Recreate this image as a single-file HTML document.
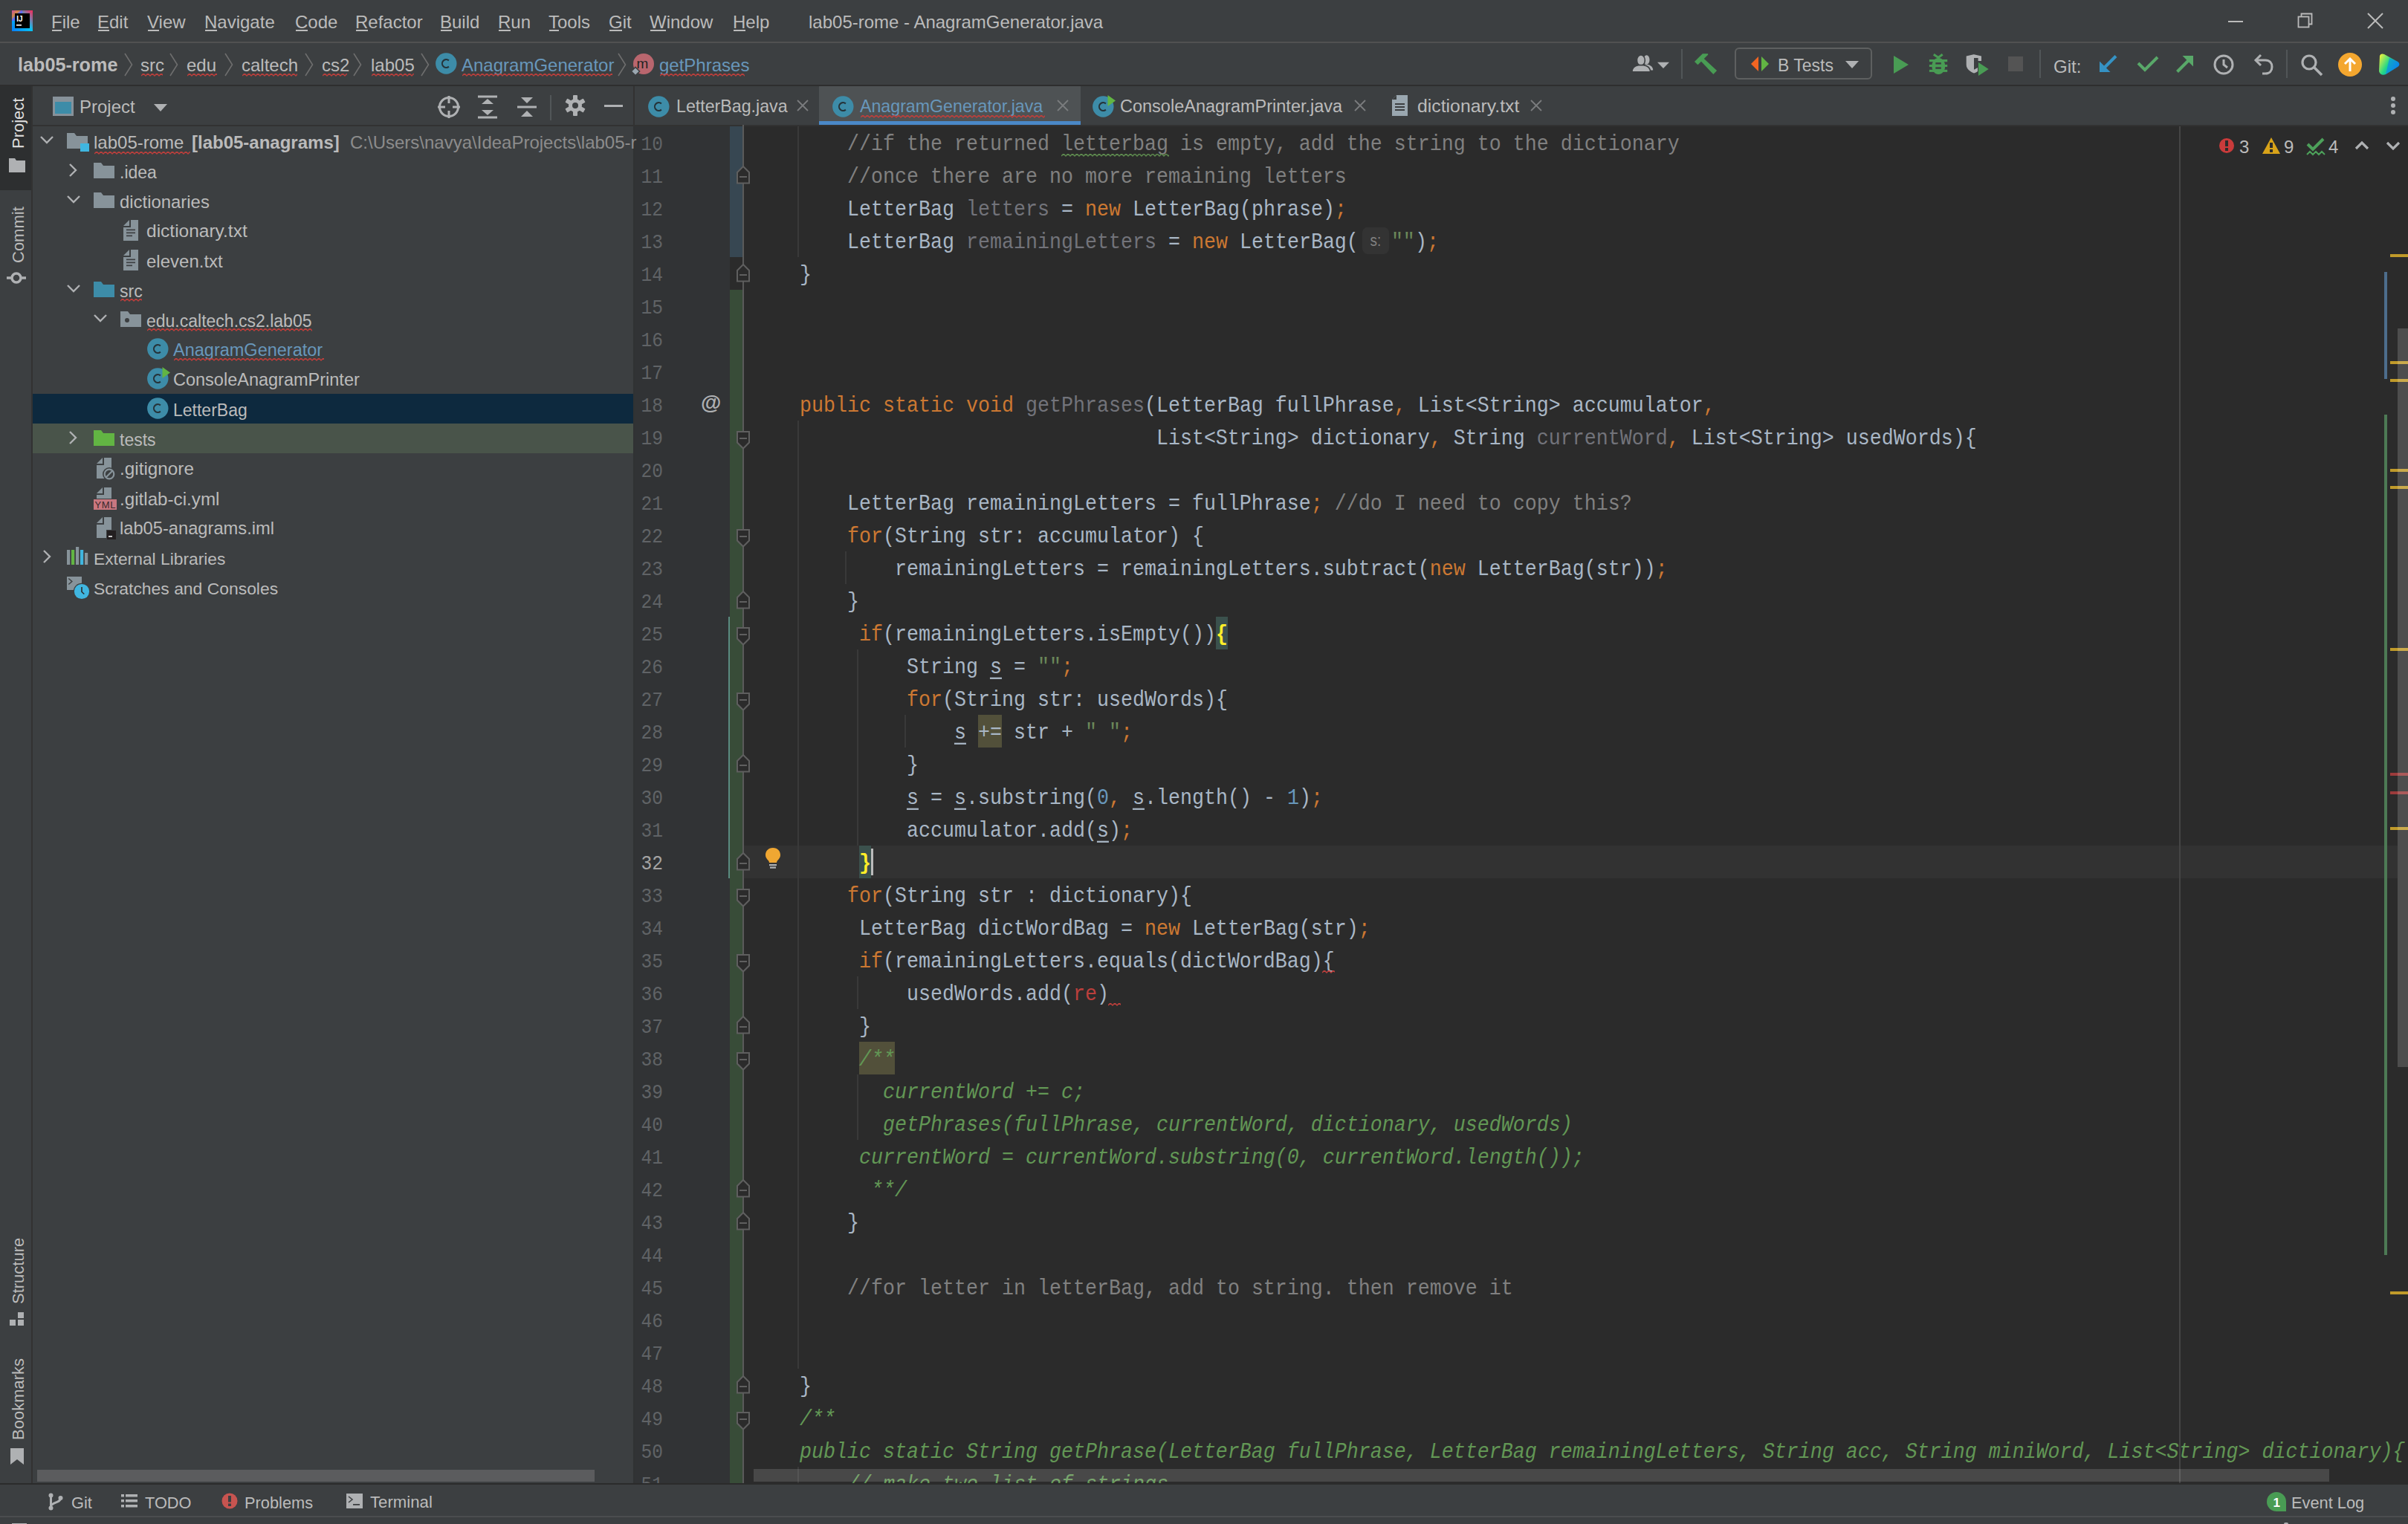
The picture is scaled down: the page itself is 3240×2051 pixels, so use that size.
<!DOCTYPE html>
<html><head><meta charset="utf-8">
<style>
*{margin:0;padding:0;box-sizing:border-box}
html,body{width:3240px;height:2051px;overflow:hidden;background:#3C3F41;font-family:"Liberation Sans",sans-serif;color:#BBBBBB;font-size:24px}
.a{position:absolute}
.t{position:absolute;white-space:pre;line-height:1}
.code{position:absolute;left:1076px;font-family:"Liberation Mono",monospace;font-size:26.67px;line-height:44px;white-space:pre;color:#A9B7C6;height:44px;transform:scaleY(1.13);transform-origin:0 29px}
.k{color:#CC7832}
.c{color:#808080}
.g{color:#72737A}
.s{color:#6A8759}
.n{color:#6897BB}
.d{color:#629755;font-style:italic}
.r{color:#BC3F3C}
.u{text-decoration:underline;text-underline-offset:5px;text-decoration-thickness:2px}
</style></head><body>
<div class="a" style="left:0px;top:0px;width:3240px;height:56px;background:#3C3F41;"></div>
<div class="a" style="left:0px;top:56px;width:3240px;height:2px;background:#515151;"></div>
<div class="a" style="left:0px;top:58px;width:3240px;height:56px;background:#3C3F41;"></div>
<div class="a" style="left:0px;top:114px;width:3240px;height:2px;background:#2E2E2E;"></div>
<div class="a" style="left:0px;top:116px;width:42px;height:1880px;background:#3C3F41;"></div>
<div class="a" style="left:0px;top:116px;width:42px;height:140px;background:#2D2F30;"></div>
<div class="a" style="left:42px;top:116px;width:2px;height:1880px;background:#323232;"></div>
<div class="a" style="left:44px;top:116px;width:808px;height:52px;background:#3C3F41;"></div>
<div class="a" style="left:44px;top:168px;width:808px;height:2px;background:#323232;"></div>
<div class="a" style="left:852px;top:116px;width:2388px;height:52px;background:#3C3F41;"></div>
<div class="a" style="left:852px;top:168px;width:2388px;height:1828px;background:#2B2B2B;"></div>
<div class="a" style="left:852px;top:168px;width:130px;height:1828px;background:#313335;"></div>
<div class="a" style="left:852px;top:116px;width:2px;height:52px;background:#323232;"></div>
<div class="a" style="left:852px;top:170px;width:2px;height:1826px;background:#303233;"></div>
<div class="a" style="left:852px;top:168px;width:2388px;height:2px;background:#323232;"></div>
<div class="a" style="left:0px;top:1996px;width:3240px;height:2px;background:#2B2B2B;"></div>
<div class="a" style="left:0px;top:1998px;width:3240px;height:42px;background:#3C3F41;"></div>
<div class="a" style="left:0px;top:2040px;width:3240px;height:2px;background:#4B4D4F;"></div>
<div class="a" style="left:0px;top:2042px;width:3240px;height:9px;background:#3C3F41;"></div>
<div class="a" style="left:1001px;top:1138px;width:2225px;height:44px;background:#323232;"></div>
<div class="a" style="left:1636px;top:830px;width:16px;height:44px;background:#3B514D;"></div>
<div class="a" style="left:1156px;top:1138px;width:16px;height:44px;background:#3B514D;"></div>
<div class="a" style="left:1316px;top:962px;width:32px;height:44px;background:#52503A;"></div>
<div class="a" style="left:1156px;top:1402px;width:48px;height:44px;background:#52503A;"></div>
<div class="a" style="left:1172px;top:1142px;width:3px;height:36px;background:#BBBBBB;"></div>
<div class="a" style="left:0;top:0;width:3240px;height:1996px;overflow:hidden">
<div class="code" style="top:173px">    <span class="c">//if the returned letterbag is empty, add the string to the dictionary</span></div>
<div class="code" style="top:217px">    <span class="c">//once there are no more remaining letters</span></div>
<div class="code" style="top:261px">    LetterBag <span class="g">letters</span> = <span class="k">new</span> LetterBag(phrase)<span class="k">;</span></div>
<div class="code" style="top:305px">    LetterBag <span class="g">remainingLetters</span> = <span class="k">new</span> LetterBag(<span style="display:inline-block;width:44px;height:34px;vertical-align:-8px;position:relative"><span style="position:absolute;left:5px;top:1px;width:36px;height:31.6px;background:#333333;border-radius:7px;color:#808080;font-family:Liberation Sans;font-size:19px;line-height:31.6px;text-align:center">s:</span></span><span class="s">&quot;&quot;</span>)<span class="k">;</span></div>
<div class="code" style="top:349px">}</div>
<div class="code" style="top:525px"><span class="k">public static void </span><span class="g">getPhrases</span>(LetterBag fullPhrase<span class="k">,</span> List&lt;String&gt; accumulator<span class="k">,</span></div>
<div class="code" style="top:569px">                              List&lt;String&gt; dictionary<span class="k">,</span> String <span class="g">currentWord</span><span class="k">,</span> List&lt;String&gt; usedWords){</div>
<div class="code" style="top:657px">    LetterBag remainingLetters = fullPhrase<span class="k">;</span><span class="c"> //do I need to copy this?</span></div>
<div class="code" style="top:701px">    <span class="k">for</span>(String str: accumulator) {</div>
<div class="code" style="top:745px">        remainingLetters = remainingLetters.subtract(<span class="k">new</span> LetterBag(str))<span class="k">;</span></div>
<div class="code" style="top:789px">    }</div>
<div class="code" style="top:833px">     <span class="k">if</span>(remainingLetters.isEmpty())<span style="color:#FFEF28;font-weight:bold">{</span></div>
<div class="code" style="top:877px">         String <span class="u">s</span> = <span class="s">&quot;&quot;</span><span class="k">;</span></div>
<div class="code" style="top:921px">         <span class="k">for</span>(String str: usedWords){</div>
<div class="code" style="top:965px">             <span class="u">s</span> += str + <span class="s">&quot; &quot;</span><span class="k">;</span></div>
<div class="code" style="top:1009px">         }</div>
<div class="code" style="top:1053px">         <span class="u">s</span> = <span class="u">s</span>.substring(<span class="n">0</span><span class="k">,</span> <span class="u">s</span>.length() - <span class="n">1</span>)<span class="k">;</span></div>
<div class="code" style="top:1097px">         accumulator.add(<span class="u">s</span>)<span class="k">;</span></div>
<div class="code" style="top:1141px">     <span style="color:#FFEF28;font-weight:bold">}</span></div>
<div class="code" style="top:1185px">    <span class="k">for</span>(String str : dictionary){</div>
<div class="code" style="top:1229px">     LetterBag dictWordBag = <span class="k">new</span> LetterBag(str)<span class="k">;</span></div>
<div class="code" style="top:1273px">     <span class="k">if</span>(remainingLetters.equals(dictWordBag){</div>
<div class="code" style="top:1317px">         usedWords.add(<span class="r">re</span>)</div>
<div class="code" style="top:1361px">     }</div>
<div class="code" style="top:1405px">     <span class="d">/**</span></div>
<div class="code" style="top:1449px">       <span class="d">currentWord += c;</span></div>
<div class="code" style="top:1493px">       <span class="d">getPhrases(fullPhrase, currentWord, dictionary, usedWords)</span></div>
<div class="code" style="top:1537px">     <span class="d">currentWord = currentWord.substring(0, currentWord.length());</span></div>
<div class="code" style="top:1581px">      <span class="d">**/</span></div>
<div class="code" style="top:1625px">    }</div>
<div class="code" style="top:1713px">    <span class="c">//for letter in letterBag, add to string. then remove it</span></div>
<div class="code" style="top:1845px">}</div>
<div class="code" style="top:1889px"><span class="d">/**</span></div>
<div class="code" style="top:1933px"><span class="d">public static String getPhrase(LetterBag fullPhrase, LetterBag remainingLetters, String acc, String miniWord, List&lt;String&gt; dictionary){</span></div>
<div class="code" style="top:1977px">    <span class="d">// make two list of strings</span></div>
</div>
<div class="a" style="left:0;top:0;width:3240px;height:1996px;overflow:hidden">
<div class="a" style="left:982px;top:170px;width:17px;height:176px;background:#374752;"></div>
<div class="a" style="left:982px;top:390px;width:17px;height:1606px;background:#384C38;"></div>
<div class="a" style="left:980px;top:830px;width:2px;height:352px;background:#5A8A80;"></div>
<div class="a" style="left:999px;top:168px;width:2px;height:1828px;background:#5A5A5A;"></div>
<div class="t" style="left:862.5px;top:184.14px;font-family:'Liberation Mono',monospace;font-size:24.6px;color:#606366;transform:scaleY(1.12);transform-origin:0 18.9px">10</div>
<div class="t" style="left:862.5px;top:228.14px;font-family:'Liberation Mono',monospace;font-size:24.6px;color:#606366;transform:scaleY(1.12);transform-origin:0 18.9px">11</div>
<div class="t" style="left:862.5px;top:272.14px;font-family:'Liberation Mono',monospace;font-size:24.6px;color:#606366;transform:scaleY(1.12);transform-origin:0 18.9px">12</div>
<div class="t" style="left:862.5px;top:316.14px;font-family:'Liberation Mono',monospace;font-size:24.6px;color:#606366;transform:scaleY(1.12);transform-origin:0 18.9px">13</div>
<div class="t" style="left:862.5px;top:360.14px;font-family:'Liberation Mono',monospace;font-size:24.6px;color:#606366;transform:scaleY(1.12);transform-origin:0 18.9px">14</div>
<div class="t" style="left:862.5px;top:404.14px;font-family:'Liberation Mono',monospace;font-size:24.6px;color:#606366;transform:scaleY(1.12);transform-origin:0 18.9px">15</div>
<div class="t" style="left:862.5px;top:448.14px;font-family:'Liberation Mono',monospace;font-size:24.6px;color:#606366;transform:scaleY(1.12);transform-origin:0 18.9px">16</div>
<div class="t" style="left:862.5px;top:492.14px;font-family:'Liberation Mono',monospace;font-size:24.6px;color:#606366;transform:scaleY(1.12);transform-origin:0 18.9px">17</div>
<div class="t" style="left:862.5px;top:536.14px;font-family:'Liberation Mono',monospace;font-size:24.6px;color:#606366;transform:scaleY(1.12);transform-origin:0 18.9px">18</div>
<div class="t" style="left:862.5px;top:580.14px;font-family:'Liberation Mono',monospace;font-size:24.6px;color:#606366;transform:scaleY(1.12);transform-origin:0 18.9px">19</div>
<div class="t" style="left:862.5px;top:624.14px;font-family:'Liberation Mono',monospace;font-size:24.6px;color:#606366;transform:scaleY(1.12);transform-origin:0 18.9px">20</div>
<div class="t" style="left:862.5px;top:668.14px;font-family:'Liberation Mono',monospace;font-size:24.6px;color:#606366;transform:scaleY(1.12);transform-origin:0 18.9px">21</div>
<div class="t" style="left:862.5px;top:712.14px;font-family:'Liberation Mono',monospace;font-size:24.6px;color:#606366;transform:scaleY(1.12);transform-origin:0 18.9px">22</div>
<div class="t" style="left:862.5px;top:756.14px;font-family:'Liberation Mono',monospace;font-size:24.6px;color:#606366;transform:scaleY(1.12);transform-origin:0 18.9px">23</div>
<div class="t" style="left:862.5px;top:800.14px;font-family:'Liberation Mono',monospace;font-size:24.6px;color:#606366;transform:scaleY(1.12);transform-origin:0 18.9px">24</div>
<div class="t" style="left:862.5px;top:844.14px;font-family:'Liberation Mono',monospace;font-size:24.6px;color:#606366;transform:scaleY(1.12);transform-origin:0 18.9px">25</div>
<div class="t" style="left:862.5px;top:888.14px;font-family:'Liberation Mono',monospace;font-size:24.6px;color:#606366;transform:scaleY(1.12);transform-origin:0 18.9px">26</div>
<div class="t" style="left:862.5px;top:932.14px;font-family:'Liberation Mono',monospace;font-size:24.6px;color:#606366;transform:scaleY(1.12);transform-origin:0 18.9px">27</div>
<div class="t" style="left:862.5px;top:976.14px;font-family:'Liberation Mono',monospace;font-size:24.6px;color:#606366;transform:scaleY(1.12);transform-origin:0 18.9px">28</div>
<div class="t" style="left:862.5px;top:1020.14px;font-family:'Liberation Mono',monospace;font-size:24.6px;color:#606366;transform:scaleY(1.12);transform-origin:0 18.9px">29</div>
<div class="t" style="left:862.5px;top:1064.14px;font-family:'Liberation Mono',monospace;font-size:24.6px;color:#606366;transform:scaleY(1.12);transform-origin:0 18.9px">30</div>
<div class="t" style="left:862.5px;top:1108.14px;font-family:'Liberation Mono',monospace;font-size:24.6px;color:#606366;transform:scaleY(1.12);transform-origin:0 18.9px">31</div>
<div class="t" style="left:862.5px;top:1152.14px;font-family:'Liberation Mono',monospace;font-size:24.6px;color:#A4A3A3;transform:scaleY(1.12);transform-origin:0 18.9px">32</div>
<div class="t" style="left:862.5px;top:1196.14px;font-family:'Liberation Mono',monospace;font-size:24.6px;color:#606366;transform:scaleY(1.12);transform-origin:0 18.9px">33</div>
<div class="t" style="left:862.5px;top:1240.14px;font-family:'Liberation Mono',monospace;font-size:24.6px;color:#606366;transform:scaleY(1.12);transform-origin:0 18.9px">34</div>
<div class="t" style="left:862.5px;top:1284.14px;font-family:'Liberation Mono',monospace;font-size:24.6px;color:#606366;transform:scaleY(1.12);transform-origin:0 18.9px">35</div>
<div class="t" style="left:862.5px;top:1328.14px;font-family:'Liberation Mono',monospace;font-size:24.6px;color:#606366;transform:scaleY(1.12);transform-origin:0 18.9px">36</div>
<div class="t" style="left:862.5px;top:1372.14px;font-family:'Liberation Mono',monospace;font-size:24.6px;color:#606366;transform:scaleY(1.12);transform-origin:0 18.9px">37</div>
<div class="t" style="left:862.5px;top:1416.14px;font-family:'Liberation Mono',monospace;font-size:24.6px;color:#606366;transform:scaleY(1.12);transform-origin:0 18.9px">38</div>
<div class="t" style="left:862.5px;top:1460.14px;font-family:'Liberation Mono',monospace;font-size:24.6px;color:#606366;transform:scaleY(1.12);transform-origin:0 18.9px">39</div>
<div class="t" style="left:862.5px;top:1504.14px;font-family:'Liberation Mono',monospace;font-size:24.6px;color:#606366;transform:scaleY(1.12);transform-origin:0 18.9px">40</div>
<div class="t" style="left:862.5px;top:1548.14px;font-family:'Liberation Mono',monospace;font-size:24.6px;color:#606366;transform:scaleY(1.12);transform-origin:0 18.9px">41</div>
<div class="t" style="left:862.5px;top:1592.14px;font-family:'Liberation Mono',monospace;font-size:24.6px;color:#606366;transform:scaleY(1.12);transform-origin:0 18.9px">42</div>
<div class="t" style="left:862.5px;top:1636.14px;font-family:'Liberation Mono',monospace;font-size:24.6px;color:#606366;transform:scaleY(1.12);transform-origin:0 18.9px">43</div>
<div class="t" style="left:862.5px;top:1680.14px;font-family:'Liberation Mono',monospace;font-size:24.6px;color:#606366;transform:scaleY(1.12);transform-origin:0 18.9px">44</div>
<div class="t" style="left:862.5px;top:1724.14px;font-family:'Liberation Mono',monospace;font-size:24.6px;color:#606366;transform:scaleY(1.12);transform-origin:0 18.9px">45</div>
<div class="t" style="left:862.5px;top:1768.14px;font-family:'Liberation Mono',monospace;font-size:24.6px;color:#606366;transform:scaleY(1.12);transform-origin:0 18.9px">46</div>
<div class="t" style="left:862.5px;top:1812.14px;font-family:'Liberation Mono',monospace;font-size:24.6px;color:#606366;transform:scaleY(1.12);transform-origin:0 18.9px">47</div>
<div class="t" style="left:862.5px;top:1856.14px;font-family:'Liberation Mono',monospace;font-size:24.6px;color:#606366;transform:scaleY(1.12);transform-origin:0 18.9px">48</div>
<div class="t" style="left:862.5px;top:1900.14px;font-family:'Liberation Mono',monospace;font-size:24.6px;color:#606366;transform:scaleY(1.12);transform-origin:0 18.9px">49</div>
<div class="t" style="left:862.5px;top:1944.14px;font-family:'Liberation Mono',monospace;font-size:24.6px;color:#606366;transform:scaleY(1.12);transform-origin:0 18.9px">50</div>
<div class="t" style="left:862.5px;top:1988.14px;font-family:'Liberation Mono',monospace;font-size:24.6px;color:#606366;transform:scaleY(1.12);transform-origin:0 18.9px">51</div>
<div class="a" style="left:1073px;top:170px;width:2px;height:176px;background:#393939;"></div>
<div class="a" style="left:1073px;top:566px;width:2px;height:1276px;background:#393939;"></div>
<div class="a" style="left:1073px;top:1974px;width:2px;height:44px;background:#393939;"></div>
<div class="a" style="left:1137px;top:742px;width:2px;height:44px;background:#393939;"></div>
<div class="a" style="left:1153px;top:874px;width:2px;height:264px;background:#393939;"></div>
<div class="a" style="left:1153px;top:1314px;width:2px;height:44px;background:#393939;"></div>
<div class="a" style="left:1153px;top:1446px;width:2px;height:88px;background:#393939;"></div>
<div class="a" style="left:1217px;top:962px;width:2px;height:44px;background:#393939;"></div>
<svg class="a" style="left:990px;top:580px" width="20" height="26" viewBox="0 0 20 26"><path d="M2 1 H18 V15.5 L10 23.5 L2 15.5 Z" fill="#2B2B2B" stroke="#5F5F5F" stroke-width="2"/><rect x="5" y="9" width="10" height="2" fill="#5F5F5F"/></svg>
<svg class="a" style="left:990px;top:712px" width="20" height="26" viewBox="0 0 20 26"><path d="M2 1 H18 V15.5 L10 23.5 L2 15.5 Z" fill="#2B2B2B" stroke="#5F5F5F" stroke-width="2"/><rect x="5" y="9" width="10" height="2" fill="#5F5F5F"/></svg>
<svg class="a" style="left:990px;top:844px" width="20" height="26" viewBox="0 0 20 26"><path d="M2 1 H18 V15.5 L10 23.5 L2 15.5 Z" fill="#2B2B2B" stroke="#5F5F5F" stroke-width="2"/><rect x="5" y="9" width="10" height="2" fill="#5F5F5F"/></svg>
<svg class="a" style="left:990px;top:932px" width="20" height="26" viewBox="0 0 20 26"><path d="M2 1 H18 V15.5 L10 23.5 L2 15.5 Z" fill="#2B2B2B" stroke="#5F5F5F" stroke-width="2"/><rect x="5" y="9" width="10" height="2" fill="#5F5F5F"/></svg>
<svg class="a" style="left:990px;top:1196px" width="20" height="26" viewBox="0 0 20 26"><path d="M2 1 H18 V15.5 L10 23.5 L2 15.5 Z" fill="#2B2B2B" stroke="#5F5F5F" stroke-width="2"/><rect x="5" y="9" width="10" height="2" fill="#5F5F5F"/></svg>
<svg class="a" style="left:990px;top:1284px" width="20" height="26" viewBox="0 0 20 26"><path d="M2 1 H18 V15.5 L10 23.5 L2 15.5 Z" fill="#2B2B2B" stroke="#5F5F5F" stroke-width="2"/><rect x="5" y="9" width="10" height="2" fill="#5F5F5F"/></svg>
<svg class="a" style="left:990px;top:1416px" width="20" height="26" viewBox="0 0 20 26"><path d="M2 1 H18 V15.5 L10 23.5 L2 15.5 Z" fill="#2B2B2B" stroke="#5F5F5F" stroke-width="2"/><rect x="5" y="9" width="10" height="2" fill="#5F5F5F"/></svg>
<svg class="a" style="left:990px;top:1900px" width="20" height="26" viewBox="0 0 20 26"><path d="M2 1 H18 V15.5 L10 23.5 L2 15.5 Z" fill="#2B2B2B" stroke="#5F5F5F" stroke-width="2"/><rect x="5" y="9" width="10" height="2" fill="#5F5F5F"/></svg>
<svg class="a" style="left:990px;top:222px" width="20" height="26" viewBox="0 0 20 26"><path d="M2 24.5 H18 V10 L10 2 L2 10 Z" fill="#2B2B2B" stroke="#5F5F5F" stroke-width="2"/><rect x="5" y="15" width="10" height="2" fill="#5F5F5F"/></svg>
<svg class="a" style="left:990px;top:354px" width="20" height="26" viewBox="0 0 20 26"><path d="M2 24.5 H18 V10 L10 2 L2 10 Z" fill="#2B2B2B" stroke="#5F5F5F" stroke-width="2"/><rect x="5" y="15" width="10" height="2" fill="#5F5F5F"/></svg>
<svg class="a" style="left:990px;top:794px" width="20" height="26" viewBox="0 0 20 26"><path d="M2 24.5 H18 V10 L10 2 L2 10 Z" fill="#2B2B2B" stroke="#5F5F5F" stroke-width="2"/><rect x="5" y="15" width="10" height="2" fill="#5F5F5F"/></svg>
<svg class="a" style="left:990px;top:1014px" width="20" height="26" viewBox="0 0 20 26"><path d="M2 24.5 H18 V10 L10 2 L2 10 Z" fill="#2B2B2B" stroke="#5F5F5F" stroke-width="2"/><rect x="5" y="15" width="10" height="2" fill="#5F5F5F"/></svg>
<svg class="a" style="left:990px;top:1146px" width="20" height="26" viewBox="0 0 20 26"><path d="M2 24.5 H18 V10 L10 2 L2 10 Z" fill="#2B2B2B" stroke="#5F5F5F" stroke-width="2"/><rect x="5" y="15" width="10" height="2" fill="#5F5F5F"/></svg>
<svg class="a" style="left:990px;top:1366px" width="20" height="26" viewBox="0 0 20 26"><path d="M2 24.5 H18 V10 L10 2 L2 10 Z" fill="#2B2B2B" stroke="#5F5F5F" stroke-width="2"/><rect x="5" y="15" width="10" height="2" fill="#5F5F5F"/></svg>
<svg class="a" style="left:990px;top:1586px" width="20" height="26" viewBox="0 0 20 26"><path d="M2 24.5 H18 V10 L10 2 L2 10 Z" fill="#2B2B2B" stroke="#5F5F5F" stroke-width="2"/><rect x="5" y="15" width="10" height="2" fill="#5F5F5F"/></svg>
<svg class="a" style="left:990px;top:1630px" width="20" height="26" viewBox="0 0 20 26"><path d="M2 24.5 H18 V10 L10 2 L2 10 Z" fill="#2B2B2B" stroke="#5F5F5F" stroke-width="2"/><rect x="5" y="15" width="10" height="2" fill="#5F5F5F"/></svg>
<svg class="a" style="left:990px;top:1850px" width="20" height="26" viewBox="0 0 20 26"><path d="M2 24.5 H18 V10 L10 2 L2 10 Z" fill="#2B2B2B" stroke="#5F5F5F" stroke-width="2"/><rect x="5" y="15" width="10" height="2" fill="#5F5F5F"/></svg>
<div class="t" style="left:943px;top:528px;font-size:28px;font-weight:bold;color:#AFB1B3">@</div>
<svg class="a" style="left:1028px;top:1140px" width="24" height="30" viewBox="0 0 24 30"><path d="M12 1 C5.5 1 2 5.5 2 10.5 C2 14.5 4.5 16.5 6.5 19 L7 21 H17 L17.5 19 C19.5 16.5 22 14.5 22 10.5 C22 5.5 18.5 1 12 1 Z" fill="#F0A732"/><rect x="7" y="23" width="10" height="2.2" fill="#AFB1B3"/><rect x="8" y="26.5" width="8" height="2.2" fill="#AFB1B3"/></svg>
</div>
<svg class="a" style="left:16px;top:14px" width="28" height="28" viewBox="0 0 28 28">
<defs><linearGradient id="lg1" x1="0" y1="0" x2="1" y2="1"><stop offset="0" stop-color="#FF318C"/><stop offset="0.35" stop-color="#FC801D"/><stop offset="0.5" stop-color="#6B57FF"/><stop offset="1" stop-color="#07C3F2"/></linearGradient>
<linearGradient id="lg2" x1="0" y1="1" x2="1" y2="0"><stop offset="0" stop-color="#087CFA"/><stop offset="0.5" stop-color="#07C3F2"/><stop offset="1" stop-color="#FE2857"/></linearGradient></defs>
<rect x="0" y="0" width="28" height="28" fill="url(#lg2)"/><rect x="0" y="0" width="14" height="14" fill="url(#lg1)" opacity="0.8"/>
<rect x="4" y="4" width="20" height="20" fill="#000"/>
<text x="6.2" y="14.5" font-family="Liberation Sans" font-weight="bold" font-size="10" fill="#fff">IJ</text>
<rect x="6" y="19" width="7" height="1.6" fill="#fff"/></svg>
<div class="t" style="left:69px;top:17.68px;font-size:24px;color:#BBBBBB;font-weight:normal;font-family:"Liberation Sans",sans-serif;">File</div>
<div class="a" style="left:70px;top:40px;width:13px;height:2px;background:#BBBBBB;"></div>
<div class="t" style="left:131px;top:17.68px;font-size:24px;color:#BBBBBB;font-weight:normal;font-family:"Liberation Sans",sans-serif;">Edit</div>
<div class="a" style="left:132px;top:40px;width:15px;height:2px;background:#BBBBBB;"></div>
<div class="t" style="left:198px;top:17.68px;font-size:24px;color:#BBBBBB;font-weight:normal;font-family:"Liberation Sans",sans-serif;">View</div>
<div class="a" style="left:199px;top:40px;width:15px;height:2px;background:#BBBBBB;"></div>
<div class="t" style="left:275px;top:17.68px;font-size:24px;color:#BBBBBB;font-weight:normal;font-family:"Liberation Sans",sans-serif;">Navigate</div>
<div class="a" style="left:276px;top:40px;width:16px;height:2px;background:#BBBBBB;"></div>
<div class="t" style="left:397px;top:17.68px;font-size:24px;color:#BBBBBB;font-weight:normal;font-family:"Liberation Sans",sans-serif;">Code</div>
<div class="a" style="left:398px;top:40px;width:16px;height:2px;background:#BBBBBB;"></div>
<div class="t" style="left:478px;top:17.68px;font-size:24px;color:#BBBBBB;font-weight:normal;font-family:"Liberation Sans",sans-serif;">Refactor</div>
<div class="a" style="left:479px;top:40px;width:16px;height:2px;background:#BBBBBB;"></div>
<div class="t" style="left:592px;top:17.68px;font-size:24px;color:#BBBBBB;font-weight:normal;font-family:"Liberation Sans",sans-serif;">Build</div>
<div class="a" style="left:593px;top:40px;width:15px;height:2px;background:#BBBBBB;"></div>
<div class="t" style="left:670px;top:17.68px;font-size:24px;color:#BBBBBB;font-weight:normal;font-family:"Liberation Sans",sans-serif;">Run</div>
<div class="a" style="left:671px;top:40px;width:16px;height:2px;background:#BBBBBB;"></div>
<div class="t" style="left:738px;top:17.68px;font-size:24px;color:#BBBBBB;font-weight:normal;font-family:"Liberation Sans",sans-serif;">Tools</div>
<div class="a" style="left:739px;top:40px;width:13px;height:2px;background:#BBBBBB;"></div>
<div class="t" style="left:819px;top:17.68px;font-size:24px;color:#BBBBBB;font-weight:normal;font-family:"Liberation Sans",sans-serif;">Git</div>
<div class="a" style="left:820px;top:40px;width:17px;height:2px;background:#BBBBBB;"></div>
<div class="t" style="left:874px;top:17.68px;font-size:24px;color:#BBBBBB;font-weight:normal;font-family:"Liberation Sans",sans-serif;">Window</div>
<div class="a" style="left:875px;top:40px;width:21px;height:2px;background:#BBBBBB;"></div>
<div class="t" style="left:986px;top:17.68px;font-size:24px;color:#BBBBBB;font-weight:normal;font-family:"Liberation Sans",sans-serif;">Help</div>
<div class="a" style="left:987px;top:40px;width:16px;height:2px;background:#BBBBBB;"></div>
<div class="t" style="left:1088px;top:17.68px;font-size:24px;color:#BBBBBB;font-weight:normal;font-family:"Liberation Sans",sans-serif;">lab05-rome - AnagramGenerator.java</div>
<div class="a" style="left:2998px;top:28px;width:20px;height:2px;background:#BBBBBB;"></div>
<svg class="a" style="left:3090px;top:16px" width="24" height="24" viewBox="0 0 24 24"><rect x="2.5" y="6.5" width="14" height="14" fill="none" stroke="#BBBBBB" stroke-width="1.8"/><path d="M6.5 6.5 V2.5 H20.5 V16.5 H16.5" fill="none" stroke="#BBBBBB" stroke-width="1.8"/></svg>
<svg class="a" style="left:3184px;top:16px" width="24" height="24" viewBox="0 0 24 24"><path d="M2 2 L22 22 M22 2 L2 22" stroke="#BBBBBB" stroke-width="2"/></svg>
<div class="t" style="left:24px;top:74.67px;font-size:25.2px;color:#BBBBBB;font-weight:bold;font-family:"Liberation Sans",sans-serif;">lab05-rome</div>
<svg class="a" style="left:167px;top:71px" width="12" height="32" viewBox="0 0 12 32"><path d="M1 1 L10.5 16 L1 31" fill="none" stroke="#6E6E6E" stroke-width="1.6"/></svg>
<div class="t" style="left:189px;top:75.68px;font-size:24px;color:#BBBBBB;font-weight:normal;font-family:"Liberation Sans",sans-serif;">src</div>
<svg class="a" style="left:190px;top:99px" width="29" height="5" viewBox="0 0 29 5"><path d="M0 3 L3 0 L6 3 L9 0 L12 3 L15 0 L18 3 L21 0 L24 3 L27 0 L30 3" fill="none" stroke="#BC3F3C" stroke-width="1.5"/></svg>
<svg class="a" style="left:228px;top:71px" width="12" height="32" viewBox="0 0 12 32"><path d="M1 1 L10.5 16 L1 31" fill="none" stroke="#6E6E6E" stroke-width="1.6"/></svg>
<div class="t" style="left:251px;top:75.68px;font-size:24px;color:#BBBBBB;font-weight:normal;font-family:"Liberation Sans",sans-serif;">edu</div>
<svg class="a" style="left:252px;top:99px" width="40" height="5" viewBox="0 0 40 5"><path d="M0 3 L3 0 L6 3 L9 0 L12 3 L15 0 L18 3 L21 0 L24 3 L27 0 L30 3 L33 0 L36 3 L39 0 L42 3" fill="none" stroke="#BC3F3C" stroke-width="1.5"/></svg>
<svg class="a" style="left:302px;top:71px" width="12" height="32" viewBox="0 0 12 32"><path d="M1 1 L10.5 16 L1 31" fill="none" stroke="#6E6E6E" stroke-width="1.6"/></svg>
<div class="t" style="left:325px;top:75.68px;font-size:24px;color:#BBBBBB;font-weight:normal;font-family:"Liberation Sans",sans-serif;">caltech</div>
<svg class="a" style="left:326px;top:99px" width="74" height="5" viewBox="0 0 74 5"><path d="M0 3 L3 0 L6 3 L9 0 L12 3 L15 0 L18 3 L21 0 L24 3 L27 0 L30 3 L33 0 L36 3 L39 0 L42 3 L45 0 L48 3 L51 0 L54 3 L57 0 L60 3 L63 0 L66 3 L69 0 L72 3 L75 0 L78 3" fill="none" stroke="#BC3F3C" stroke-width="1.5"/></svg>
<svg class="a" style="left:410px;top:71px" width="12" height="32" viewBox="0 0 12 32"><path d="M1 1 L10.5 16 L1 31" fill="none" stroke="#6E6E6E" stroke-width="1.6"/></svg>
<div class="t" style="left:433px;top:75.68px;font-size:24px;color:#BBBBBB;font-weight:normal;font-family:"Liberation Sans",sans-serif;">cs2</div>
<svg class="a" style="left:434px;top:99px" width="33" height="5" viewBox="0 0 33 5"><path d="M0 3 L3 0 L6 3 L9 0 L12 3 L15 0 L18 3 L21 0 L24 3 L27 0 L30 3 L33 0 L36 3" fill="none" stroke="#BC3F3C" stroke-width="1.5"/></svg>
<svg class="a" style="left:475px;top:71px" width="12" height="32" viewBox="0 0 12 32"><path d="M1 1 L10.5 16 L1 31" fill="none" stroke="#6E6E6E" stroke-width="1.6"/></svg>
<div class="t" style="left:499px;top:75.68px;font-size:24px;color:#BBBBBB;font-weight:normal;font-family:"Liberation Sans",sans-serif;">lab05</div>
<svg class="a" style="left:500px;top:99px" width="57" height="5" viewBox="0 0 57 5"><path d="M0 3 L3 0 L6 3 L9 0 L12 3 L15 0 L18 3 L21 0 L24 3 L27 0 L30 3 L33 0 L36 3 L39 0 L42 3 L45 0 L48 3 L51 0 L54 3 L57 0 L60 3" fill="none" stroke="#BC3F3C" stroke-width="1.5"/></svg>
<svg class="a" style="left:566px;top:71px" width="12" height="32" viewBox="0 0 12 32"><path d="M1 1 L10.5 16 L1 31" fill="none" stroke="#6E6E6E" stroke-width="1.6"/></svg>
<svg class="a" style="left:586px;top:70px" width="32" height="32" viewBox="0 0 32 32"><circle cx="14.3" cy="15.5" r="14.2" fill="#3D8CA8"/><path d="M17.9 11.4 A5.4 5.4 0 1 0 17.9 19.6" fill="none" stroke="#253339" stroke-width="2.1"/></svg>
<div class="t" style="left:621px;top:75.68px;font-size:24px;color:#6897BB;font-weight:normal;font-family:"Liberation Sans",sans-serif;">AnagramGenerator</div>
<svg class="a" style="left:622px;top:99px" width="202" height="5" viewBox="0 0 202 5"><path d="M0 3 L3 0 L6 3 L9 0 L12 3 L15 0 L18 3 L21 0 L24 3 L27 0 L30 3 L33 0 L36 3 L39 0 L42 3 L45 0 L48 3 L51 0 L54 3 L57 0 L60 3 L63 0 L66 3 L69 0 L72 3 L75 0 L78 3 L81 0 L84 3 L87 0 L90 3 L93 0 L96 3 L99 0 L102 3 L105 0 L108 3 L111 0 L114 3 L117 0 L120 3 L123 0 L126 3 L129 0 L132 3 L135 0 L138 3 L141 0 L144 3 L147 0 L150 3 L153 0 L156 3 L159 0 L162 3 L165 0 L168 3 L171 0 L174 3 L177 0 L180 3 L183 0 L186 3 L189 0 L192 3 L195 0 L198 3 L201 0 L204 3" fill="none" stroke="#BC3F3C" stroke-width="1.5"/></svg>
<svg class="a" style="left:831px;top:71px" width="12" height="32" viewBox="0 0 12 32"><path d="M1 1 L10.5 16 L1 31" fill="none" stroke="#6E6E6E" stroke-width="1.6"/></svg>
<svg class="a" style="left:848px;top:70px" width="34" height="34" viewBox="0 0 34 34"><circle cx="18" cy="16" r="14" fill="#B9666E"/><text x="8.5" y="21.5" font-family="Liberation Sans" font-size="19" fill="#232323">m</text><rect x="3" y="22" width="8" height="8" transform="rotate(45 7 26)" fill="#9AA7B0" stroke="#3C3F41" stroke-width="1.5"/></svg>
<div class="t" style="left:887px;top:75.68px;font-size:24px;color:#6897BB;font-weight:normal;font-family:"Liberation Sans",sans-serif;">getPhrases</div>
<svg class="a" style="left:888px;top:99px" width="114" height="5" viewBox="0 0 114 5"><path d="M0 3 L3 0 L6 3 L9 0 L12 3 L15 0 L18 3 L21 0 L24 3 L27 0 L30 3 L33 0 L36 3 L39 0 L42 3 L45 0 L48 3 L51 0 L54 3 L57 0 L60 3 L63 0 L66 3 L69 0 L72 3 L75 0 L78 3 L81 0 L84 3 L87 0 L90 3 L93 0 L96 3 L99 0 L102 3 L105 0 L108 3 L111 0 L114 3 L117 0 L120 3" fill="none" stroke="#BC3F3C" stroke-width="1.5"/></svg>
<svg class="a" style="left:2194px;top:70px" width="56" height="32" viewBox="0 0 56 32"><ellipse cx="21.5" cy="10.5" rx="4" ry="6.2" fill="#AFB1B3"/><path d="M19 16.5 C26 16.5 30.2 19.5 30.2 24.5 H21 Z" fill="#AFB1B3"/><ellipse cx="13.9" cy="11.2" rx="5.4" ry="7.2" fill="#AFB1B3" stroke="#3C3F41" stroke-width="1.6"/><path d="M1.9 26.9 C1.9 21.5 5 18.5 10.5 17.6 H17.5 C23 18.5 26.6 21.5 26.6 26.9 Z" fill="#AFB1B3" stroke="#3C3F41" stroke-width="1.6"/><path d="M36 13.8 L52 13.8 L44 22 Z" fill="#AFB1B3"/></svg>
<div class="a" style="left:2262px;top:66px;width:2px;height:40px;background:#515658;"></div>
<svg class="a" style="left:2276px;top:68px" width="40" height="36" viewBox="0 0 40 36"><path d="M4 14.9 L14.9 4.3 H22.1 V5.8 L8.4 19.3 Z" fill="#499C54"/><path d="M12.3 14.1 L16.2 10.6 L34.1 27.1 L29.3 31.9 Z" fill="#499C54"/></svg>
<div class="a" style="left:2334px;top:64px;width:185px;height:43px;border:2.5px solid #5E6060;border-radius:6px"></div>
<svg class="a" style="left:2355px;top:76px" width="28" height="20" viewBox="0 0 28 20"><path d="M11 0 L1 10 L11 20 Z" fill="#F26522"/><path d="M15 0 L25 10 L15 20 Z" fill="#62B543"/></svg>
<div class="t" style="left:2392px;top:76.53px;font-size:23px;color:#BBBBBB;font-weight:normal;font-family:"Liberation Sans",sans-serif;">B Tests</div>
<svg class="a" style="left:2482px;top:81px" width="20" height="12" viewBox="0 0 20 12"><path d="M1 1 L19 1 L10 11 Z" fill="#AFB1B3"/></svg>
<svg class="a" style="left:2546px;top:74px" width="24" height="26" viewBox="0 0 24 26"><path d="M2 1 L22 13 L2 25 Z" fill="#499C54"/></svg>
<svg class="a" style="left:2595px;top:72px" width="26" height="30" viewBox="0 0 26 30"><path d="M6.8 1.2 L13 5.5 L18.7 1.2" fill="none" stroke="#499C54" stroke-width="3"/><ellipse cx="13.3" cy="17" rx="9" ry="11" fill="#499C54"/><rect x="0.9" y="8" width="24.3" height="3.2" fill="#499C54"/><rect x="0.9" y="15" width="24.3" height="3" fill="#499C54"/><rect x="0.9" y="21.8" width="24.3" height="3.1" fill="#499C54"/><rect x="9.3" y="12.1" width="7.5" height="2.5" fill="#3C3F41"/><rect x="9.3" y="18.3" width="7.5" height="2.5" fill="#3C3F41"/></svg>
<svg class="a" style="left:2645px;top:72px" width="34" height="36" viewBox="0 0 34 36"><path d="M0.7 3.5 L10.5 1.2 L11 1.2 V26.5 C6 24.5 0.7 21 0.7 15 Z" fill="#AFB1B3"/><path d="M11 1.2 L21 3.5 V10 H16.6 V5.9 H11 Z" fill="#AFB1B3"/><path d="M11 21.8 L16 19 V24 C14 25.5 12 26.3 11 26.5 Z" fill="#AFB1B3"/><path d="M17 12 L30.7 21 L17 30 Z" fill="#499C54"/></svg>
<div class="a" style="left:2702px;top:76px;width:20px;height:20px;background:#545454;"></div>
<div class="a" style="left:2744px;top:67px;width:2px;height:38px;background:#515658;"></div>
<div class="t" style="left:2763px;top:77.68px;font-size:24px;color:#BBBBBB;font-weight:normal;font-family:"Liberation Sans",sans-serif;">Git:</div>
<svg class="a" style="left:2825px;top:74px" width="24" height="23" viewBox="0 0 24 23"><path d="M0 23 L0 8.5 L14.5 23 Z" fill="#3592C4"/><path d="M22 1.5 L5 18.5" stroke="#3592C4" stroke-width="4"/></svg>
<svg class="a" style="left:2875px;top:74px" width="30" height="24" viewBox="0 0 30 24"><path d="M2 11 L11 20 L28 3" fill="none" stroke="#59A869" stroke-width="4"/></svg>
<svg class="a" style="left:2928px;top:75px" width="23" height="23" viewBox="0 0 23 23"><path d="M23 0 L23 14.5 L8.5 0 Z" fill="#59A869"/><path d="M1.5 21.5 L18 5" stroke="#59A869" stroke-width="4"/></svg>
<svg class="a" style="left:2977px;top:72px" width="30" height="30" viewBox="0 0 30 30"><circle cx="15" cy="15" r="12" fill="none" stroke="#AFB1B3" stroke-width="3"/><path d="M15 8 V15 L20 19" fill="none" stroke="#AFB1B3" stroke-width="3"/></svg>
<svg class="a" style="left:3032px;top:72px" width="28" height="30" viewBox="0 0 28 30"><path d="M4 9 H16 C22 9 25 13 25 18 C25 23 22 27 16 27 H12" fill="none" stroke="#AFB1B3" stroke-width="3"/><path d="M10 2 L3 9 L10 16" fill="none" stroke="#AFB1B3" stroke-width="3"/></svg>
<div class="a" style="left:3076px;top:67px;width:2px;height:38px;background:#515658;"></div>
<svg class="a" style="left:3095px;top:72px" width="32" height="32" viewBox="0 0 32 32"><circle cx="12" cy="12" r="9" fill="none" stroke="#AFB1B3" stroke-width="3.2"/><path d="M18.5 18.5 L29 29" stroke="#AFB1B3" stroke-width="3.6"/></svg>
<svg class="a" style="left:3145px;top:70px" width="34" height="34" viewBox="0 0 34 34"><circle cx="17" cy="17" r="16" fill="#F4A72F"/><path d="M17 26 V10 M10 16 L17 9 L24 16" fill="none" stroke="#fff" stroke-width="3"/></svg>
<svg class="a" style="left:3199px;top:72px" width="30" height="29" viewBox="0 0 30 29"><defs><linearGradient id="cwm" x1="0" y1="0.2" x2="1" y2="0.8"><stop offset="0" stop-color="#E4F141"/><stop offset="0.45" stop-color="#21D789"/><stop offset="1" stop-color="#087CFA"/></linearGradient></defs><path d="M3 3 C4 0 7 0 9 1 L27 11 C30 13 30 16 27 18 L11 28 C7 30 3 28 2 24 Z" fill="url(#cwm)"/><path d="M16 6 L27 11 C30 13 30 16 27 18 L11 28 Z" fill="#087CFA" opacity="0.55"/></svg>
<div class="t" style="left:14px;top:200px;font-size:22px;color:#DFDFDF;transform-origin:0 0;transform:rotate(-90deg)">Project</div>
<svg class="a" style="left:11px;top:211px" width="24" height="22" viewBox="0 0 24 22"><path d="M1 2 H9 L11 5 H23 V21 H1 Z" fill="#AFB1B3"/></svg>
<div class="t" style="left:14px;top:354px;font-size:22px;color:#BBBBBB;transform-origin:0 0;transform:rotate(-90deg)">Commit</div>
<svg class="a" style="left:8px;top:363px" width="28" height="22" viewBox="0 0 28 22"><circle cx="14" cy="11" r="6" fill="none" stroke="#AFB1B3" stroke-width="3.5"/><path d="M1 11 H7 M21 11 H27" stroke="#AFB1B3" stroke-width="3.5"/></svg>
<div class="t" style="left:14px;top:1755px;font-size:22px;color:#BBBBBB;transform-origin:0 0;transform:rotate(-90deg)">Structure</div>
<svg class="a" style="left:13px;top:1766px" width="20" height="20" viewBox="0 0 20 20"><rect x="0" y="10" width="8" height="8" fill="#AFB1B3"/><rect x="11" y="10" width="8" height="8" fill="#AFB1B3"/><rect x="11" y="0" width="8" height="8" fill="#AFB1B3"/></svg>
<div class="t" style="left:14px;top:1938px;font-size:22px;color:#BBBBBB;transform-origin:0 0;transform:rotate(-90deg)">Bookmarks</div>
<svg class="a" style="left:13px;top:1948px" width="20" height="24" viewBox="0 0 20 24"><path d="M1 1 H19 V23 L10 16 L1 23 Z" fill="#AFB1B3"/></svg>
<svg class="a" style="left:70px;top:129px" width="30" height="28" viewBox="0 0 30 28"><rect x="1" y="1" width="28" height="26" fill="#9AA7B0" opacity="0.8"/><rect x="4" y="8" width="22" height="16" fill="#3D8CA8"/></svg>
<div class="t" style="left:107px;top:131.68px;font-size:24px;color:#BBBBBB;font-weight:normal;font-family:"Liberation Sans",sans-serif;">Project</div>
<svg class="a" style="left:206px;top:139px" width="20" height="12" viewBox="0 0 20 12"><path d="M1 1 L19 1 L10 11 Z" fill="#AFB1B3"/></svg>
<svg class="a" style="left:588px;top:128px" width="32" height="32" viewBox="0 0 32 32"><circle cx="16" cy="16" r="12.5" fill="none" stroke="#AFB1B3" stroke-width="3"/><path d="M16 1 V11 M16 21 V31 M1 16 H11 M21 16 H31" stroke="#AFB1B3" stroke-width="3"/></svg>
<svg class="a" style="left:642px;top:128px" width="28" height="32" viewBox="0 0 28 32"><path d="M1 2 H27 M1 30 H27" stroke="#AFB1B3" stroke-width="3"/><path d="M6 12 L14 5 L22 12 Z M6 20 L14 27 L22 20 Z" fill="#AFB1B3"/></svg>
<svg class="a" style="left:695px;top:128px" width="28" height="32" viewBox="0 0 28 32"><path d="M1 16 H27" stroke="#AFB1B3" stroke-width="3"/><path d="M6 3 L14 11 L22 3 Z M6 29 L14 21 L22 29 Z" fill="#AFB1B3"/></svg>
<div class="a" style="left:740px;top:128px;width:2px;height:34px;background:#515658;"></div>
<svg class="a" style="left:760px;top:128px" width="28" height="28" viewBox="0 0 28 28"><g fill="#AFB1B3"><circle cx="14" cy="14" r="9"/><rect x="11" y="0" width="6" height="28" rx="1"/><rect x="11" y="0" width="6" height="28" rx="1" transform="rotate(60 14 14)"/><rect x="11" y="0" width="6" height="28" rx="1" transform="rotate(120 14 14)"/></g><circle cx="14" cy="14" r="4" fill="#3C3F41"/></svg>
<div class="a" style="left:813px;top:141px;width:25px;height:3px;background:#AFB1B3;"></div>
<div class="a" style="left:44px;top:530px;width:808px;height:40px;background:#0D293E;"></div>
<div class="a" style="left:44px;top:570px;width:808px;height:40px;background:#49544A;"></div>
<svg class="a" style="left:53px;top:182px" width="20" height="14" viewBox="0 0 20 14"><path d="M2 2 L10 10 L18 2" fill="none" stroke="#AFB1B3" stroke-width="2.4"/></svg>
<svg class="a" style="left:89px;top:178px" width="32" height="26" viewBox="0 0 32 26"><path d="M1 1 H11 L14 5 H29 V22 H1 Z" fill="#87939A"/><rect x="19" y="15" width="12" height="11" fill="#40B6E0" stroke="#3C3F41" stroke-width="0"/></svg>
<div class="t" style="left:126px;top:179.68px;font-size:24px;color:#BBBBBB;font-weight:normal;font-family:"Liberation Sans",sans-serif;">lab05-rome</div>
<svg class="a" style="left:127px;top:204px" width="129" height="5" viewBox="0 0 129 5"><path d="M0 3 L3 0 L6 3 L9 0 L12 3 L15 0 L18 3 L21 0 L24 3 L27 0 L30 3 L33 0 L36 3 L39 0 L42 3 L45 0 L48 3 L51 0 L54 3 L57 0 L60 3 L63 0 L66 3 L69 0 L72 3 L75 0 L78 3 L81 0 L84 3 L87 0 L90 3 L93 0 L96 3 L99 0 L102 3 L105 0 L108 3 L111 0 L114 3 L117 0 L120 3 L123 0 L126 3 L129 0 L132 3" fill="none" stroke="#BC3F3C" stroke-width="1.5"/></svg>
<div class="t" style="left:258px;top:179.68px;font-size:24px;color:#BBBBBB;font-weight:bold;font-family:"Liberation Sans",sans-serif;">[lab05-anagrams]</div>
<div class="t" style="left:471px;top:179.68px;font-size:24px;color:#8C8C8C;font-weight:normal;font-family:"Liberation Sans",sans-serif;width:381px;overflow:hidden">C:\Users\navya\IdeaProjects\lab05-r</div>
<svg class="a" style="left:92px;top:219px" width="14" height="20" viewBox="0 0 14 20"><path d="M2 2 L10 10 L2 18" fill="none" stroke="#AFB1B3" stroke-width="2.4"/></svg>
<svg class="a" style="left:125px;top:218px" width="32" height="26" viewBox="0 0 32 26"><path d="M1 1 H11 L14 5 H29 V22 H1 Z" fill="#87939A"/></svg>
<div class="t" style="left:161px;top:220.53px;font-size:23px;color:#BBBBBB;font-weight:normal;font-family:"Liberation Sans",sans-serif;">.idea</div>
<svg class="a" style="left:89px;top:262px" width="20" height="14" viewBox="0 0 20 14"><path d="M2 2 L10 10 L18 2" fill="none" stroke="#AFB1B3" stroke-width="2.4"/></svg>
<svg class="a" style="left:125px;top:258px" width="32" height="26" viewBox="0 0 32 26"><path d="M1 1 H11 L14 5 H29 V22 H1 Z" fill="#87939A"/></svg>
<div class="t" style="left:161px;top:259.77px;font-size:23.9px;color:#BBBBBB;font-weight:normal;font-family:"Liberation Sans",sans-serif;">dictionaries</div>
<svg class="a" style="left:166px;top:296px" width="32" height="30" viewBox="0 0 32 30"><path d="M0 8 L8 0 V8 Z M10 0 H20 V28 H0 V10 H10 Z" fill="#87939A"/><rect x="4" y="12.5" width="12" height="1.7" fill="#3C3F41"/><rect x="4" y="16.5" width="12" height="1.7" fill="#3C3F41"/><rect x="4" y="20.5" width="8" height="1.7" fill="#3C3F41"/></svg>
<div class="t" style="left:197px;top:299.26px;font-size:24.5px;color:#BBBBBB;font-weight:normal;font-family:"Liberation Sans",sans-serif;">dictionary.txt</div>
<svg class="a" style="left:166px;top:336px" width="32" height="30" viewBox="0 0 32 30"><path d="M0 8 L8 0 V8 Z M10 0 H20 V28 H0 V10 H10 Z" fill="#87939A"/><rect x="4" y="12.5" width="12" height="1.7" fill="#3C3F41"/><rect x="4" y="16.5" width="12" height="1.7" fill="#3C3F41"/><rect x="4" y="20.5" width="8" height="1.7" fill="#3C3F41"/></svg>
<div class="t" style="left:197px;top:339.68px;font-size:24px;color:#BBBBBB;font-weight:normal;font-family:"Liberation Sans",sans-serif;">eleven.txt</div>
<svg class="a" style="left:89px;top:382px" width="20" height="14" viewBox="0 0 20 14"><path d="M2 2 L10 10 L18 2" fill="none" stroke="#AFB1B3" stroke-width="2.4"/></svg>
<svg class="a" style="left:125px;top:378px" width="32" height="26" viewBox="0 0 32 26"><path d="M1 1 H11 L14 5 H29 V22 H1 Z" fill="#3D8CA8"/></svg>
<div class="t" style="left:161px;top:380.53px;font-size:23px;color:#BBBBBB;font-weight:normal;font-family:"Liberation Sans",sans-serif;">src</div>
<svg class="a" style="left:162px;top:402px" width="29" height="5" viewBox="0 0 29 5"><path d="M0 3 L3 0 L6 3 L9 0 L12 3 L15 0 L18 3 L21 0 L24 3 L27 0 L30 3" fill="none" stroke="#BC3F3C" stroke-width="1.5"/></svg>
<svg class="a" style="left:125px;top:422px" width="20" height="14" viewBox="0 0 20 14"><path d="M2 2 L10 10 L18 2" fill="none" stroke="#AFB1B3" stroke-width="2.4"/></svg>
<svg class="a" style="left:161px;top:418px" width="32" height="26" viewBox="0 0 32 26"><path d="M1 1 H11 L14 5 H29 V22 H1 Z" fill="#87939A"/><circle cx="10" cy="13" r="3" fill="#3C3F41"/></svg>
<div class="t" style="left:197px;top:420.53px;font-size:23px;color:#BBBBBB;font-weight:normal;font-family:"Liberation Sans",sans-serif;">edu.caltech.cs2.lab05</div>
<svg class="a" style="left:198px;top:442px" width="222" height="5" viewBox="0 0 222 5"><path d="M0 3 L3 0 L6 3 L9 0 L12 3 L15 0 L18 3 L21 0 L24 3 L27 0 L30 3 L33 0 L36 3 L39 0 L42 3 L45 0 L48 3 L51 0 L54 3 L57 0 L60 3 L63 0 L66 3 L69 0 L72 3 L75 0 L78 3 L81 0 L84 3 L87 0 L90 3 L93 0 L96 3 L99 0 L102 3 L105 0 L108 3 L111 0 L114 3 L117 0 L120 3 L123 0 L126 3 L129 0 L132 3 L135 0 L138 3 L141 0 L144 3 L147 0 L150 3 L153 0 L156 3 L159 0 L162 3 L165 0 L168 3 L171 0 L174 3 L177 0 L180 3 L183 0 L186 3 L189 0 L192 3 L195 0 L198 3 L201 0 L204 3 L207 0 L210 3 L213 0 L216 3 L219 0 L222 3 L225 0 L228 3" fill="none" stroke="#BC3F3C" stroke-width="1.5"/></svg>
<svg class="a" style="left:198px;top:454px" width="32" height="32" viewBox="0 0 32 32"><circle cx="14.3" cy="15.5" r="14.2" fill="#3D8CA8"/><path d="M17.9 11.4 A5.4 5.4 0 1 0 17.9 19.6" fill="none" stroke="#253339" stroke-width="2.1"/></svg>
<div class="t" style="left:233px;top:460.11px;font-size:23.5px;color:#6897BB;font-weight:normal;font-family:"Liberation Sans",sans-serif;">AnagramGenerator</div>
<svg class="a" style="left:234px;top:482px" width="202" height="5" viewBox="0 0 202 5"><path d="M0 3 L3 0 L6 3 L9 0 L12 3 L15 0 L18 3 L21 0 L24 3 L27 0 L30 3 L33 0 L36 3 L39 0 L42 3 L45 0 L48 3 L51 0 L54 3 L57 0 L60 3 L63 0 L66 3 L69 0 L72 3 L75 0 L78 3 L81 0 L84 3 L87 0 L90 3 L93 0 L96 3 L99 0 L102 3 L105 0 L108 3 L111 0 L114 3 L117 0 L120 3 L123 0 L126 3 L129 0 L132 3 L135 0 L138 3 L141 0 L144 3 L147 0 L150 3 L153 0 L156 3 L159 0 L162 3 L165 0 L168 3 L171 0 L174 3 L177 0 L180 3 L183 0 L186 3 L189 0 L192 3 L195 0 L198 3 L201 0 L204 3" fill="none" stroke="#BC3F3C" stroke-width="1.5"/></svg>
<svg class="a" style="left:198px;top:494px" width="32" height="32" viewBox="0 0 32 32"><circle cx="14.3" cy="15.5" r="14.2" fill="#3D8CA8"/><path d="M17.9 11.4 A5.4 5.4 0 1 0 17.9 19.6" fill="none" stroke="#253339" stroke-width="2.1"/><path d="M20.5 0 L31 7.5 L20.5 15 Z" fill="#62B543"/></svg>
<div class="t" style="left:233px;top:500.11px;font-size:23.5px;color:#BBBBBB;font-weight:normal;font-family:"Liberation Sans",sans-serif;">ConsoleAnagramPrinter</div>
<svg class="a" style="left:198px;top:534px" width="32" height="32" viewBox="0 0 32 32"><circle cx="14.3" cy="15.5" r="14.2" fill="#3D8CA8"/><path d="M17.9 11.4 A5.4 5.4 0 1 0 17.9 19.6" fill="none" stroke="#253339" stroke-width="2.1"/></svg>
<div class="t" style="left:233px;top:540.53px;font-size:23px;color:#BBBBBB;font-weight:normal;font-family:"Liberation Sans",sans-serif;">LetterBag</div>
<svg class="a" style="left:92px;top:579px" width="14" height="20" viewBox="0 0 14 20"><path d="M2 2 L10 10 L2 18" fill="none" stroke="#AFB1B3" stroke-width="2.4"/></svg>
<svg class="a" style="left:125px;top:578px" width="32" height="26" viewBox="0 0 32 26"><path d="M1 1 H11 L14 5 H29 V22 H1 Z" fill="#62B543"/></svg>
<div class="t" style="left:161px;top:580.53px;font-size:23px;color:#BBBBBB;font-weight:normal;font-family:"Liberation Sans",sans-serif;">tests</div>
<svg class="a" style="left:130px;top:616px" width="32" height="30" viewBox="0 0 32 30"><path d="M0 8 L8 0 V8 Z M10 0 H20 V28 H0 V10 H10 Z" fill="#87939A"/><circle cx="17" cy="22" r="9" fill="#3C3F41"/><circle cx="17" cy="22" r="6.3" fill="none" stroke="#87939A" stroke-width="2.2"/><path d="M12.8 26.2 L21.2 17.8" stroke="#87939A" stroke-width="2.2"/></svg>
<div class="t" style="left:161px;top:619.43px;font-size:24.3px;color:#BBBBBB;font-weight:normal;font-family:"Liberation Sans",sans-serif;">.gitignore</div>
<svg class="a" style="left:130px;top:656px" width="32" height="30" viewBox="0 0 32 30"><path d="M0 8 L8 0 V8 Z M10 0 H20 V28 H0 V10 H10 Z" fill="#87939A"/><rect x="0" y="15" width="32" height="15" fill="#3C3F41"/></svg>
<svg class="a" style="left:126px;top:672px" width="31" height="14" viewBox="0 0 31 14"><rect x="0" y="0" width="31" height="14" fill="#C9777F"/><text x="1.5" y="12.2" font-family="Liberation Sans" font-size="13" fill="#3A2A2E" textLength="28">YML</text></svg>
<div class="t" style="left:161px;top:659.51px;font-size:24.2px;color:#BBBBBB;font-weight:normal;font-family:"Liberation Sans",sans-serif;">.gitlab-ci.yml</div>
<svg class="a" style="left:130px;top:696px" width="32" height="30" viewBox="0 0 32 30"><path d="M0 8 L8 0 V8 Z M10 0 H20 V28 H0 V10 H10 Z" fill="#87939A"/><rect x="13" y="17" width="14" height="13" fill="#3C3F41"/><rect x="14" y="18" width="12" height="12" fill="#231F20"/><rect x="16" y="25" width="5" height="1.8" fill="#DDDDDD"/></svg>
<div class="t" style="left:161px;top:699.94px;font-size:23.7px;color:#BBBBBB;font-weight:normal;font-family:"Liberation Sans",sans-serif;">lab05-anagrams.iml</div>
<svg class="a" style="left:57px;top:739px" width="14" height="20" viewBox="0 0 14 20"><path d="M2 2 L10 10 L2 18" fill="none" stroke="#AFB1B3" stroke-width="2.4"/></svg>
<svg class="a" style="left:90px;top:736px" width="30" height="25" viewBox="0 0 30 25"><rect x="0" y="4" width="4.2" height="20" fill="#87939A"/><rect x="6" y="4" width="4.2" height="20" fill="#62B543"/><rect x="12" y="0" width="4.2" height="24" fill="#87939A"/><rect x="18" y="4" width="4.2" height="20" fill="#40B6E0"/><rect x="24" y="8" width="4.2" height="16" fill="#87939A"/></svg>
<div class="t" style="left:126px;top:740.70px;font-size:22.8px;color:#BBBBBB;font-weight:normal;font-family:"Liberation Sans",sans-serif;">External Libraries</div>
<svg class="a" style="left:89px;top:775px" width="34" height="34" viewBox="0 0 34 34"><path d="M1 1 H21 V19 H1 Z" fill="#87939A"/><path d="M3.3 3.5 L7.8 7.5 L3.3 11.5" fill="none" stroke="#3C3F41" stroke-width="1.5"/><circle cx="21" cy="21" r="11.3" fill="#3C3F41"/><circle cx="21" cy="21" r="10.1" fill="#40B6E0"/><path d="M21 15 V21.5 L24.3 24.5" fill="none" stroke="#2B2B2B" stroke-width="1.6"/></svg>
<div class="t" style="left:126px;top:780.62px;font-size:22.9px;color:#BBBBBB;font-weight:normal;font-family:"Liberation Sans",sans-serif;">Scratches and Consoles</div>
<div class="a" style="left:50px;top:1978px;width:750px;height:16px;background:#5B5C5E;"></div>
<div class="a" style="left:1102px;top:116px;width:352px;height:52px;background:#4E5254;"></div>
<div class="a" style="left:1102px;top:163px;width:352px;height:5px;background:#4A88C7;"></div>
<svg class="a" style="left:872px;top:128px" width="32" height="32" viewBox="0 0 32 32"><circle cx="14.3" cy="15.5" r="14.2" fill="#3D8CA8"/><path d="M17.9 11.4 A5.4 5.4 0 1 0 17.9 19.6" fill="none" stroke="#253339" stroke-width="2.1"/></svg>
<div class="t" style="left:910px;top:132.36px;font-size:23.2px;color:#BBBBBB;font-weight:normal;font-family:"Liberation Sans",sans-serif;">LetterBag.java</div>
<svg class="a" style="left:1072px;top:134px" width="16" height="16" viewBox="0 0 16 16"><path d="M1 1 L15 15 M15 1 L1 15" stroke="#7A7C7E" stroke-width="1.8"/></svg>
<svg class="a" style="left:1120px;top:128px" width="32" height="32" viewBox="0 0 32 32"><circle cx="14.3" cy="15.5" r="14.2" fill="#3D8CA8"/><path d="M17.9 11.4 A5.4 5.4 0 1 0 17.9 19.6" fill="none" stroke="#253339" stroke-width="2.1"/></svg>
<div class="t" style="left:1157px;top:132.36px;font-size:23.2px;color:#6897BB;font-weight:normal;font-family:"Liberation Sans",sans-serif;">AnagramGenerator.java</div>
<svg class="a" style="left:1158px;top:155px" width="248" height="5" viewBox="0 0 248 5"><path d="M0 3 L3 0 L6 3 L9 0 L12 3 L15 0 L18 3 L21 0 L24 3 L27 0 L30 3 L33 0 L36 3 L39 0 L42 3 L45 0 L48 3 L51 0 L54 3 L57 0 L60 3 L63 0 L66 3 L69 0 L72 3 L75 0 L78 3 L81 0 L84 3 L87 0 L90 3 L93 0 L96 3 L99 0 L102 3 L105 0 L108 3 L111 0 L114 3 L117 0 L120 3 L123 0 L126 3 L129 0 L132 3 L135 0 L138 3 L141 0 L144 3 L147 0 L150 3 L153 0 L156 3 L159 0 L162 3 L165 0 L168 3 L171 0 L174 3 L177 0 L180 3 L183 0 L186 3 L189 0 L192 3 L195 0 L198 3 L201 0 L204 3 L207 0 L210 3 L213 0 L216 3 L219 0 L222 3 L225 0 L228 3 L231 0 L234 3 L237 0 L240 3 L243 0 L246 3 L249 0 L252 3" fill="none" stroke="#BC3F3C" stroke-width="1.5"/></svg>
<svg class="a" style="left:1422px;top:134px" width="16" height="16" viewBox="0 0 16 16"><path d="M1 1 L15 15 M15 1 L1 15" stroke="#7A7C7E" stroke-width="1.8"/></svg>
<svg class="a" style="left:1470px;top:128px" width="32" height="32" viewBox="0 0 32 32"><circle cx="14.3" cy="15.5" r="14.2" fill="#3D8CA8"/><path d="M17.9 11.4 A5.4 5.4 0 1 0 17.9 19.6" fill="none" stroke="#253339" stroke-width="2.1"/><path d="M20.5 0 L31 7.5 L20.5 15 Z" fill="#62B543"/></svg>
<div class="t" style="left:1507px;top:132.11px;font-size:23.5px;color:#BBBBBB;font-weight:normal;font-family:"Liberation Sans",sans-serif;">ConsoleAnagramPrinter.java</div>
<svg class="a" style="left:1822px;top:134px" width="16" height="16" viewBox="0 0 16 16"><path d="M1 1 L15 15 M15 1 L1 15" stroke="#7A7C7E" stroke-width="1.8"/></svg>
<svg class="a" style="left:1872px;top:127px" width="24" height="30" viewBox="0 0 24 30"><path d="M7 1 H22 V29 H1 V7 Z" fill="#9AA7B0"/><path d="M1 7 L7 1 V7 Z" fill="#3C3F41"/><path d="M5 13 H18 M5 17 H18 M5 21 H18" stroke="#3C3F41" stroke-width="1.8"/></svg>
<div class="t" style="left:1907px;top:131.01px;font-size:24.8px;color:#BBBBBB;font-weight:normal;font-family:"Liberation Sans",sans-serif;">dictionary.txt</div>
<svg class="a" style="left:2059px;top:134px" width="16" height="16" viewBox="0 0 16 16"><path d="M1 1 L15 15 M15 1 L1 15" stroke="#7A7C7E" stroke-width="1.8"/></svg>
<div class="a" style="left:3217px;top:130px;width:6px;height:6px;background:#AFB1B3;border-radius:3px"></div>
<div class="a" style="left:3217px;top:139px;width:6px;height:6px;background:#AFB1B3;border-radius:3px"></div>
<div class="a" style="left:3217px;top:148px;width:6px;height:6px;background:#AFB1B3;border-radius:3px"></div>
<div class="a" style="left:2932px;top:170px;width:2px;height:1826px;background:#454545;"></div>
<svg class="a" style="left:2985px;top:185px" width="22" height="22" viewBox="0 0 22 22"><circle cx="11" cy="11" r="10" fill="#C93B3B"/><rect x="9" y="4" width="4" height="8" fill="#2B2B2B"/><rect x="9" y="14" width="4" height="4" fill="#2B2B2B"/></svg>
<div class="t" style="left:3013px;top:185.68px;font-size:24px;color:#BBBBBB;font-weight:normal;font-family:"Liberation Sans",sans-serif;">3</div>
<svg class="a" style="left:3043px;top:184px" width="26" height="24" viewBox="0 0 26 24"><path d="M13 1 L25 23 H1 Z" fill="#D8A319"/><rect x="11" y="8" width="4" height="7" fill="#2B2B2B"/><rect x="11" y="17" width="4" height="4" fill="#2B2B2B"/></svg>
<div class="t" style="left:3073px;top:185.68px;font-size:24px;color:#BBBBBB;font-weight:normal;font-family:"Liberation Sans",sans-serif;">9</div>
<svg class="a" style="left:3103px;top:184px" width="26" height="26" viewBox="0 0 26 26"><path d="M2 10 L9 17 L23 3" fill="none" stroke="#4DA05A" stroke-width="4"/><path d="M1 24 L5 20 L9 24 L13 20 L17 24 L21 20 L25 24" fill="none" stroke="#4DA05A" stroke-width="2"/></svg>
<div class="t" style="left:3133px;top:185.68px;font-size:24px;color:#BBBBBB;font-weight:normal;font-family:"Liberation Sans",sans-serif;">4</div>
<svg class="a" style="left:3168px;top:188px" width="20" height="14" viewBox="0 0 20 14"><path d="M2 12 L10 4 L18 12" fill="none" stroke="#AFB1B3" stroke-width="3.2"/></svg>
<svg class="a" style="left:3210px;top:189px" width="20" height="14" viewBox="0 0 20 14"><path d="M2 3 L10 11 L18 3" fill="none" stroke="#AFB1B3" stroke-width="3.2"/></svg>
<div class="a" style="left:3208px;top:366px;width:4px;height:144px;background:#4D6D8C;"></div>
<div class="a" style="left:3208px;top:558px;width:4px;height:1131px;background:#4D7A55;"></div>
<div class="a" style="left:3216px;top:342px;width:24px;height:4px;background:#C09A2A;"></div>
<div class="a" style="left:3216px;top:486px;width:24px;height:4px;background:#C09A2A;"></div>
<div class="a" style="left:3216px;top:510px;width:24px;height:4px;background:#C09A2A;"></div>
<div class="a" style="left:3216px;top:631px;width:24px;height:4px;background:#C09A2A;"></div>
<div class="a" style="left:3216px;top:654px;width:24px;height:4px;background:#C09A2A;"></div>
<div class="a" style="left:3216px;top:872px;width:24px;height:4px;background:#C09A2A;"></div>
<div class="a" style="left:3216px;top:1113px;width:24px;height:4px;background:#C09A2A;"></div>
<div class="a" style="left:3216px;top:1738px;width:24px;height:4px;background:#C09A2A;"></div>
<div class="a" style="left:3216px;top:1040px;width:24px;height:4px;background:#9B3B3B;"></div>
<div class="a" style="left:3216px;top:1065px;width:24px;height:4px;background:#9B3B3B;"></div>
<div class="a" style="left:3226px;top:442px;width:14px;height:994px;background:rgba(255,255,255,0.16);"></div>
<div class="a" style="left:1014px;top:1977px;width:2120px;height:17px;background:rgba(255,255,255,0.14);"></div>
<svg class="a" style="left:64px;top:2009px" width="22" height="24" viewBox="0 0 22 24"><circle cx="4.5" cy="3.5" r="3" fill="#AFB1B3"/><circle cx="4.5" cy="20.5" r="3" fill="#AFB1B3"/><circle cx="17.5" cy="7" r="3" fill="#AFB1B3"/><path d="M4.5 3.5 V20.5 M17.5 7 C17.5 14 6 12 4.5 18" fill="none" stroke="#AFB1B3" stroke-width="3"/></svg>
<div class="t" style="left:96px;top:2011.55px;font-size:21.8px;color:#BBBBBB;font-weight:normal;font-family:"Liberation Sans",sans-serif;">Git</div>
<svg class="a" style="left:163px;top:2011px" width="22" height="18" viewBox="0 0 22 18"><rect x="0" y="0" width="4" height="3.5" fill="#AFB1B3"/><rect x="6" y="0" width="16" height="3.5" fill="#AFB1B3"/><rect x="0" y="7" width="4" height="3.5" fill="#AFB1B3"/><rect x="6" y="7" width="16" height="3.5" fill="#AFB1B3"/><rect x="0" y="14" width="4" height="3.5" fill="#AFB1B3"/><rect x="6" y="14" width="16" height="3.5" fill="#AFB1B3"/></svg>
<div class="t" style="left:195px;top:2011.55px;font-size:21.8px;color:#BBBBBB;font-weight:normal;font-family:"Liberation Sans",sans-serif;">TODO</div>
<svg class="a" style="left:298px;top:2009px" width="22" height="22" viewBox="0 0 22 22"><circle cx="11" cy="11" r="10.5" fill="#C75450"/><rect x="9" y="4" width="4" height="8.5" fill="#3C3F41"/><rect x="9" y="14.5" width="4" height="3.5" fill="#3C3F41"/></svg>
<div class="t" style="left:329px;top:2011.55px;font-size:21.8px;color:#BBBBBB;font-weight:normal;font-family:"Liberation Sans",sans-serif;">Problems</div>
<svg class="a" style="left:466px;top:2010px" width="22" height="20" viewBox="0 0 22 20"><rect x="0" y="0" width="22" height="20" fill="#AFB1B3"/><path d="M3 4 L8 8 L3 12" fill="none" stroke="#3C3F41" stroke-width="1.6"/><rect x="9" y="14" width="9" height="1.8" fill="#3C3F41"/></svg>
<div class="t" style="left:498px;top:2011.21px;font-size:22.2px;color:#BBBBBB;font-weight:normal;font-family:"Liberation Sans",sans-serif;">Terminal</div>
<svg class="a" style="left:3050px;top:2008px" width="26" height="26" viewBox="0 0 26 26"><path d="M13 0 A13 13 0 1 0 13 26 H26 V13 A13 13 0 0 0 13 0 Z" fill="#499C54"/><text x="8.5" y="20" font-family="Liberation Sans" font-weight="bold" font-size="17" fill="#fff">1</text></svg>
<div class="t" style="left:3083px;top:2011.55px;font-size:21.8px;color:#BBBBBB;font-weight:normal;font-family:"Liberation Sans",sans-serif;">Event Log</div>
<div class="a" style="left:16px;top:2050px;width:20px;height:1px;background:#AFB1B3;"></div>
<div class="a" style="left:3073px;top:2049px;width:6px;height:2px;background:#AFB1B3;border-radius:3px 3px 0 0"></div>
<svg class="a" style="left:1428px;top:207px" width="145" height="5" viewBox="0 0 145 5"><path d="M0 3 L3 0 L6 3 L9 0 L12 3 L15 0 L18 3 L21 0 L24 3 L27 0 L30 3 L33 0 L36 3 L39 0 L42 3 L45 0 L48 3 L51 0 L54 3 L57 0 L60 3 L63 0 L66 3 L69 0 L72 3 L75 0 L78 3 L81 0 L84 3 L87 0 L90 3 L93 0 L96 3 L99 0 L102 3 L105 0 L108 3 L111 0 L114 3 L117 0 L120 3 L123 0 L126 3 L129 0 L132 3 L135 0 L138 3 L141 0 L144 3 L147 0 L150 3" fill="none" stroke="#5E8B4F" stroke-width="1.5"/></svg>
<svg class="a" style="left:1779px;top:1306px" width="17" height="5" viewBox="0 0 17 5"><path d="M0 3 L3 0 L6 3 L9 0 L12 3 L15 0 L18 3" fill="none" stroke="#BC3F3C" stroke-width="1.5"/></svg>
<svg class="a" style="left:1491px;top:1350px" width="17" height="5" viewBox="0 0 17 5"><path d="M0 3 L3 0 L6 3 L9 0 L12 3 L15 0 L18 3" fill="none" stroke="#BC3F3C" stroke-width="1.5"/></svg>
</body></html>
